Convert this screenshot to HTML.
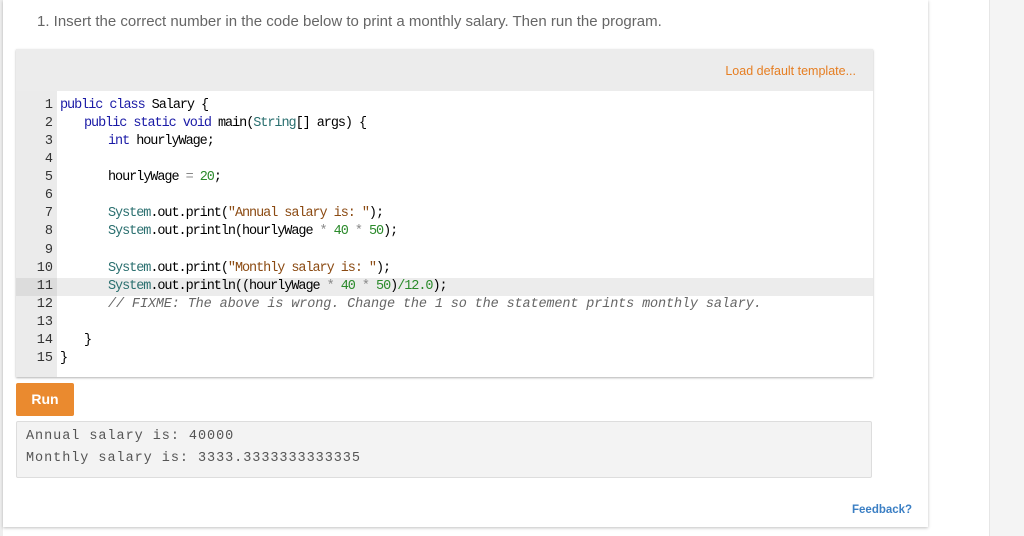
<!DOCTYPE html>
<html><head><style>
body{margin:0;width:1024px;height:536px;background:#fff;position:relative;overflow:hidden;font-family:"Liberation Sans",sans-serif}
.left{position:absolute;left:0;top:0;width:3px;height:536px;background:#eee}
.card{position:absolute;left:3px;top:0;width:925px;height:527px;background:#fff;box-shadow:0 1px 3px rgba(0,0,0,.25)}
.right{position:absolute;left:989px;top:0;width:35px;height:536px;background:#f4f4f4;border-left:1px solid #e6e6e6}
.title{position:absolute;left:37px;top:13px;font-size:15px;color:#666}
.ed{position:absolute;left:16px;top:49px;width:857px;height:328px;background:#fff;box-shadow:0 1px 2px rgba(0,0,0,.3)}
.hdr{position:absolute;left:0;top:0;width:857px;height:42px;background:#ececec}
.load{position:absolute;right:17px;top:15px;font-size:12.5px;color:#e67e22}
.gut{position:absolute;left:0;top:42px;width:41px;height:286px;background:#ebebeb}
.hl{position:absolute;left:0;top:229px;width:857px;height:18px;background:#ececec}
.hlg{position:absolute;left:0;top:229px;width:41px;height:18px;background:#dcdcdc}
.code{position:absolute;left:0;top:48px;font-family:"Liberation Mono",monospace;font-size:13.5px;letter-spacing:-1.05px;line-height:18.07px;color:#000}
.ln{display:block;white-space:pre;height:18.07px}
.n{display:inline-block;width:37px;text-align:right;color:#333;margin-right:7px;letter-spacing:0}
.k{color:#1a1aa6}.t{color:#2a6f6f}.s{color:#8b4a12}.g{color:#2b8a2b}.o{color:#888}
.c{color:#666;font-style:italic;letter-spacing:-.13px}
.i1{padding-left:24px}.i2{padding-left:48px}
.run{position:absolute;left:16px;top:383px;width:58px;height:33px;background:#ea8a2f;color:#fff;font-weight:bold;font-size:14px;text-align:center;line-height:33px;border-radius:2px}
.out{position:absolute;left:16px;top:421px;width:854px;height:55px;background:#f3f3f3;border:1px solid #ddd;border-radius:2px;font-family:"Liberation Mono",monospace;font-size:13.5px;color:#555;letter-spacing:.95px}
.out div{position:absolute;left:9px}
.fb{position:absolute;left:852px;top:504px;font-size:11.5px;font-weight:bold;color:#3b7fc4}
</style></head><body>
<div class="left"></div>
<div class="card"></div>
<div class="right"></div>
<div class="title">1. Insert the correct number in the code below to print a monthly salary. Then run the program.</div>
<div class="ed">
<div class="hdr"><span class="load">Load default template...</span></div>
<div class="gut"></div>
<div class="hl"></div><div class="hlg"></div>
<div class="code">
<span class="ln"><span class="n">1</span><span class="k">public class</span> Salary {</span>
<span class="ln"><span class="n">2</span><span class="i1"><span class="k">public static void</span> main(<span class="t">String</span>[] args) {</span></span>
<span class="ln"><span class="n">3</span><span class="i2"><span class="k">int</span> hourlyWage;</span></span>
<span class="ln"><span class="n">4</span></span>
<span class="ln"><span class="n">5</span><span class="i2">hourlyWage <span class="o">=</span> <span class="g">20</span>;</span></span>
<span class="ln"><span class="n">6</span></span>
<span class="ln"><span class="n">7</span><span class="i2"><span class="t">System</span>.out.print(<span class="s">"Annual salary is: "</span>);</span></span>
<span class="ln"><span class="n">8</span><span class="i2"><span class="t">System</span>.out.println(hourlyWage <span class="o">*</span> <span class="g">40</span> <span class="o">*</span> <span class="g">50</span>);</span></span>
<span class="ln"><span class="n">9</span></span>
<span class="ln"><span class="n">10</span><span class="i2"><span class="t">System</span>.out.print(<span class="s">"Monthly salary is: "</span>);</span></span>
<span class="ln"><span class="n">11</span><span class="i2"><span class="t">System</span>.out.println((hourlyWage <span class="o">*</span> <span class="g">40</span> <span class="o">*</span> <span class="g">50</span>)<span class="g">/12.0</span>);</span></span>
<span class="ln"><span class="n">12</span><span class="i2 c">// FIXME: The above is wrong. Change the 1 so the statement prints monthly salary.</span></span>
<span class="ln"><span class="n">13</span></span>
<span class="ln"><span class="n">14</span><span class="i1">}</span></span>
<span class="ln"><span class="n">15</span>}</span>
</div>
</div>
<div class="run">Run</div>
<div class="out"><div style="top:7px">Annual salary is: 40000</div><div style="top:29px">Monthly salary is: 3333.3333333333335</div></div>
<div class="fb">Feedback?</div>
</body></html>
